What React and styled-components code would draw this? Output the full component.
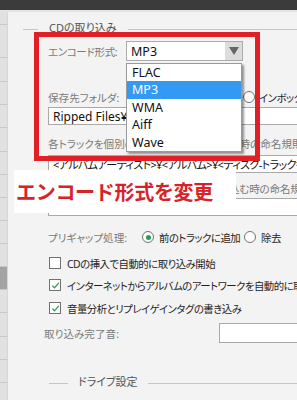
import styled, { createGlobalStyle } from "styled-components"

const GlobalStyle = createGlobalStyle`
  html, body {
    margin: 0;
    padding: 0;
    background: #f3f3f3;
  }
`

const sideHeights = [13, 33, 24, 23, 23, 24, 23, 23, 23, 23, 23, 23, 23, 24, 23, 23, 30]

const Frame = styled.div`
  position: relative;
  width: 297px;
  height: 400px;
  overflow: hidden;
  background: #f3f3f3;
  display: flex;
  flex-direction: column;
  font-family: "Noto Sans", "Noto Sans CJK JP", sans-serif;
  font-feature-settings: "palt" 1;
  font-size: 10.6px;
  color: #1e1e1e;
`

const TitleBar = styled.div`
  flex: none;
  height: 10px;
  background: #3b3b3b;
  border-bottom: 2px solid #e3e3e3;
`

const Body = styled.div`
  flex: 1;
  display: flex;
  min-height: 0;
`

const Sidebar = styled.div`
  flex: none;
  width: 7px;
  background: #e1e1e1;
  border-right: 1px solid #d7d7d7;
  display: flex;
  flex-direction: column;
`

const SideItem = styled.div`
  flex: none;
  box-sizing: border-box;
  height: ${p => p.$h}px;
  border-bottom: 1px solid #c8c8c8;
  background: ${p => (p.$active ? "#a4a4a4" : "transparent")};
`

const Main = styled.div`
  flex: 1;
  min-width: 0;
  display: flex;
  flex-direction: column;
  padding-top: ${p => p.$top || 0}px;
`

const GroupHeader = styled.div`
  display: flex;
  align-items: center;
  gap: ${p => p.$gap}px;
  height: 14px;
  margin-top: ${p => p.$top || 0}px;
  padding-left: ${p => p.$indent}px;
  color: #555;
  font-size: 11px;
  white-space: nowrap;
`

const GroupLine = styled.span`
  height: 1px;
  background: #c6c6c6;
  width: ${p => (p.$w ? p.$w + "px" : "auto")};
  flex: ${p => (p.$w ? "none" : "1")};
  transform: translateY(2px);
`

const Content = styled.div`
  display: flex;
  flex-direction: column;
  padding-left: 40px;
`

const Row = styled.div`
  display: flex;
  align-items: center;
  height: ${p => p.$h || 14}px;
  margin-top: ${p => p.$top || 0}px;
  white-space: nowrap;
`

const Label = styled.span`
  flex: none;
  width: ${p => (p.$w ? p.$w + "px" : "auto")};
  margin-left: ${p => p.$ml || 0}px;
  color: #7a7a7a;
  letter-spacing: ${p => p.$ls || 0}px;
`

const Select = styled.div`
  flex: none;
  box-sizing: border-box;
  width: 117px;
  height: 20px;
  border: 1px solid #acacac;
  background: #fff;
  display: flex;
  align-items: center;
  font-size: 12.5px;
  color: #111;
  span {
    flex: 1;
    padding-left: 4px;
  }
`

const Arrow = styled.div`
  flex: none;
  width: 17px;
  height: 100%;
  background: #dcdcdc;
  display: flex;
  align-items: center;
  justify-content: center;
  &::after {
    content: "";
    border-left: 5px solid transparent;
    border-right: 5px solid transparent;
    border-top: 8px solid #666;
  }
`

const Field = styled.div`
  flex: none;
  box-sizing: border-box;
  width: ${p => p.$w}px;
  height: ${p => p.$h}px;
  margin-top: ${p => p.$top || 0}px;
  border: 1px solid #a9a9a9;
  background: #fff;
  display: flex;
  align-items: center;
  padding-left: 4px;
  font-size: ${p => p.$fs || 11}px;
  color: #111;
  white-space: nowrap;
  overflow: hidden;
  letter-spacing: ${p => p.$ls || 0}px;
`

const Option = styled.span`
  flex: none;
  display: flex;
  align-items: center;
  gap: ${p => p.$gap || 5}px;
  width: ${p => (p.$w ? p.$w + "px" : "auto")};
  margin-left: ${p => p.$ml || 0}px;
  font-size: 10.4px;
  letter-spacing: -0.5px;
  color: #1e1e1e;
`

const Radio = styled.span`
  flex: none;
  box-sizing: border-box;
  width: 12px;
  height: 12px;
  border-radius: 50%;
  border: 1px solid #727272;
  background: #fff;
  display: flex;
  align-items: center;
  justify-content: center;
  &::after {
    content: "";
    display: ${p => (p.$on ? "block" : "none")};
    width: 5px;
    height: 5px;
    border-radius: 50%;
    background: #2f9a56;
  }
`

const Check = styled.span`
  flex: none;
  box-sizing: border-box;
  width: 12px;
  height: 12px;
  border: 1px solid #717171;
  background: #fff;
  display: flex;
  align-items: center;
  justify-content: center;
`

const Dropdown = styled.ul`
  position: absolute;
  left: 126px;
  top: 63px;
  width: 116px;
  margin: 0;
  padding: 0;
  list-style: none;
  box-sizing: border-box;
  border: 1px solid #9a9a9a;
  background: #fff;
  box-shadow: 2px 2px 2px rgba(0, 0, 0, 0.4);
  font-size: 12.5px;
`

const DropItem = styled.li`
  height: 17.4px;
  line-height: 17.4px;
  padding-left: 5px;
  background: ${p => (p.$selected ? "#3399f3" : "transparent")};
  color: ${p => (p.$selected ? "#fff" : "#111")};
`

const Highlight = styled.div`
  position: absolute;
  left: 34px;
  top: 32px;
  width: 226px;
  height: 129px;
  box-sizing: border-box;
  border: 5px solid #e01f27;
  pointer-events: none;
`

const Caption = styled.div`
  position: absolute;
  left: 14px;
  top: 170px;
  width: 222px;
  height: 43px;
  box-sizing: border-box;
  padding-left: 2px;
  background: #fff;
  display: flex;
  align-items: center;
  font-family: "Noto Sans CJK JP", sans-serif;
  font-feature-settings: normal;
  font-weight: 700;
  font-size: 20px;
  letter-spacing: -0.3px;
  color: #d8222a;
  white-space: nowrap;
`

function CheckMark() {
  return (
    <svg width="9" height="9" viewBox="0 0 9 9">
      <path d="M1.3 4.6 L3.5 6.8 L7.8 1.8" fill="none" stroke="#2f9a56" strokeWidth="1.3" />
    </svg>
  )
}

const formats = ["FLAC", "MP3", "WMA", "Aiff", "Wave"]

export default function App() {
  return (
    <Frame>
      <GlobalStyle />
      <TitleBar />
      <Body>
        <Sidebar>
          {sideHeights.map((h, i) => (
            <SideItem key={i} $h={h} $active={i === 11} />
          ))}
        </Sidebar>
        <Main $top={8}>
          <GroupHeader $indent={15} $gap={11}>
            <GroupLine $w={15} />
            <span>CDの取り込み</span>
            <GroupLine />
          </GroupHeader>
          <Content>
            <Row $h={20} $top={7}>
              <Label $w={78} $ls={-0.4}>エンコード形式:</Label>
              <Select>
                <span>MP3</span>
                <Arrow />
              </Select>
            </Row>
            <Row $top={29}>
              <Label $w={78}>保存先フォルダ:</Label>
              <Option $w={117}>
                <Radio />
                指定フォルダ
              </Option>
              <Option $gap={4}>
                <Radio />
                インボックス
              </Option>
            </Row>
            <Field $w={262} $h={18} $top={3} $fs={12}>Ripped Files¥</Field>
            <Row $top={11}>
              <Label>各トラックを個別のファイルとして取り込む時の命名規則</Label>
            </Row>
            <Field $w={262} $h={18} $top={5} $fs={11} $ls={-0.6}>
              &lt;アルバムアーティスト&gt;¥&lt;アルバム&gt;¥&lt;ディスク-トラック番号&gt; &lt;タイトル&gt;
            </Field>
            <Row $top={8}>
              <Label $ls={-0.25}>アルバム全体を単一のファイルとして取り込む時の命名規則</Label>
            </Row>
            <Field $w={262} $h={18} $top={3}>
              &lt;アルバムアーティスト&gt;¥&lt;アルバム&gt;
            </Field>
            <Row $top={14}>
              <Label $w={94}>プリギャップ処理:</Label>
              <Option $w={102}>
                <Radio $on />
                前のトラックに追加
              </Option>
              <Option>
                <Radio />
                除去
              </Option>
            </Row>
            <Row $top={12}>
              <Option $ml={1} $gap={6}>
                <Check />
                CDの挿入で自動的に取り込み開始
              </Option>
            </Row>
            <Row $top={8}>
              <Option $ml={1} $gap={6}>
                <Check>
                  <CheckMark />
                </Check>
                インターネットからアルバムのアートワークを自動的に取得
              </Option>
            </Row>
            <Row $top={9}>
              <Option $ml={1} $gap={6}>
                <Check>
                  <CheckMark />
                </Check>
                音量分析とリプレイゲインタグの書き込み
              </Option>
            </Row>
            <Row $h={20} $top={8}>
              <Label $w={175} $ml={-4}>取り込み完了音:</Label>
              <Field $w={90} $h={20} />
            </Row>
          </Content>
          <GroupHeader $indent={41} $gap={10} $top={31}>
            <GroupLine $w={19} />
            <span>ドライブ設定</span>
            <GroupLine />
          </GroupHeader>
        </Main>
      </Body>
      <Highlight />
      <Dropdown>
        {formats.map(f => (
          <DropItem key={f} $selected={f === "MP3"}>
            {f}
          </DropItem>
        ))}
      </Dropdown>
      <Caption>エンコード形式を変更</Caption>
    </Frame>
  )
}
